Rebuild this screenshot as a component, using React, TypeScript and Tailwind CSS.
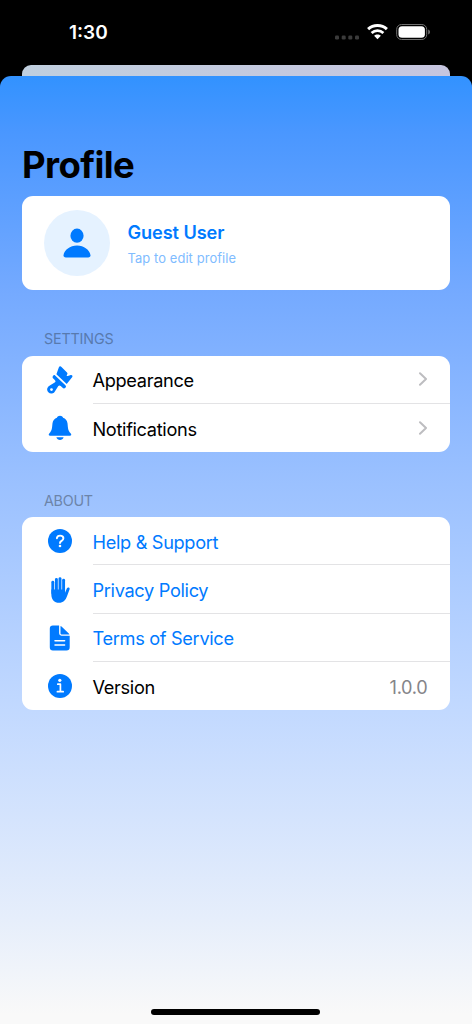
import React from 'react';

interface RowProps {
  icon: React.ReactNode;
  label: string;
  link?: boolean;
  last?: boolean;
  children?: React.ReactNode;
}

const BrushIcon = () => (
  <svg width="28" height="28" viewBox="0 0 28 28" fill="#007aff">
    <path d="M10.4 8.2L12.8 1.4C13.3 .1 14.6 0 15.5 .9L21 6.5C21.8 7.4 21.6 8.1 20.9 9C20.4 9.8 21 10.2 21.8 9.9L24.8 9.1C26.3 8.9 27 10.2 26.1 11.3L20.7 17.9Z" />
    <path
      fillRule="evenodd"
      d="M9.1 9.4L19.4 19.2C20.4 20.2 20 21.1 19.3 21.8C18.5 22.6 17.5 22.6 16.6 21.8L14.7 20C13.8 19.2 13 19.3 12.3 20L9.2 25.1A4.2 4.2 0 1 1 3.8 19.5L8.7 16.6C9.8 15.8 9.7 15 8.8 14.1L7 12.3C5.7 11 7.6 8 9.1 9.4ZM5.5 22.2A1.4 1.4 0 1 0 5.5 25A1.4 1.4 0 1 0 5.5 22.2Z"
    />
  </svg>
);

const BellIcon = () => (
  <svg width="28" height="28" viewBox="0 0 28 28" fill="#007aff">
    <path d="M4.2 21.8C2.5 21.8 2.3 20.4 3.4 19.2C6.3 16.4 6 13.4 6.5 9.2C6.9 6.4 8.6 4.6 10.9 3.8C11.5 1.1 16.5 1.1 17.1 3.8C19.4 4.6 21.1 6.4 21.5 9.2C22 13.4 21.7 16.4 24.6 19.2C25.7 20.4 25.5 21.8 23.8 21.8Z" />
    <path d="M10.4 23.3H17.6C17.1 25.1 15.7 26.1 14 26.1C12.3 26.1 10.9 25.1 10.4 23.3Z" />
  </svg>
);

const HelpIcon = () => (
  <svg width="28" height="28" viewBox="0 0 28 28" fill="none">
    <circle cx="14" cy="14" r="12" fill="#007aff" />
    <path
      d="M10.9 11.2C11.1 9.5 12.3 8.6 14.1 8.6C16 8.6 17.4 9.6 17.4 11.3C17.4 12.6 16.7 13.2 15.6 13.9C14.5 14.6 14 15.1 14 16"
      stroke="white"
      strokeWidth="1.9"
      strokeLinecap="round"
      strokeLinejoin="round"
    />
    <circle cx="14" cy="19" r="1.3" fill="white" />
  </svg>
);

const HandIcon = () => (
  <svg width="28" height="28" viewBox="0 0 28 28" fill="none">
    <g stroke="#007aff" strokeLinecap="round" strokeWidth="2.9">
      <path d="M6.8 6.2V17" />
      <path d="M10.4 3.5V16" />
      <path d="M14 2.6V16" />
      <path d="M17.6 4.2V17" />
    </g>
    <path
      d="M5.35 13.5H19.05V16.7L20.8 12.6C21.5 10.9 24.2 11.4 23.6 13.2L21.1 20C19.6 24.4 17.1 26.8 13.2 26.8C8.1 26.8 5.35 23.4 5.35 18.5Z"
      fill="#007aff"
    />
  </svg>
);

const DocumentIcon = () => (
  <svg width="28" height="28" viewBox="0 0 28 28" fill="#007aff">
    <path d="M6.9 1.5H13.1V9.3Q13.1 11.7 15.5 11.7H23.7V23.2Q23.7 26.5 20.5 26.5H6.9Q3.8 26.5 3.8 23.2V4.8Q3.8 1.5 6.9 1.5Z" />
    <path d="M14.5 1.9Q15 2 15.5 2.5L22.8 9.5Q23.3 10 23.4 10.4H15.5Q14.5 10.4 14.5 9.4Z" />
    <path d="M9 16.7H18.6M9 21.1H18.6" stroke="white" strokeWidth="1.5" strokeLinecap="round" />
  </svg>
);

const InfoIcon = () => (
  <svg width="28" height="28" viewBox="0 0 28 28" fill="none">
    <circle cx="14" cy="14" r="12" fill="#007aff" />
    <circle cx="13.8" cy="8.3" r="1.6" fill="white" />
    <path
      d="M11.8 12.2H14.4V19.4M11.4 19.7H17.2"
      stroke="white"
      strokeWidth="1.7"
      strokeLinecap="round"
      strokeLinejoin="round"
    />
  </svg>
);

const Chevron = () => (
  <svg width="10" height="14" viewBox="0 0 10 14" fill="none">
    <path d="M2 1.3L8 7L2 12.7" stroke="#bdbdc0" strokeWidth="2" strokeLinecap="round" strokeLinejoin="round" />
  </svg>
);

function Row({ icon, label, link, last, children }: RowProps) {
  return (
    <div className="flex h-[48.3px] items-center pl-[23.5px]">
      <div className="w-7 shrink-0">{icon}</div>
      <div
        className={`ml-[19px] flex h-full flex-1 items-center justify-between pr-[22px] ${
          last ? '' : 'border-b border-[#e3e3e5]'
        }`}
      >
        <span className={`pt-[3px] text-[18.2px] tracking-[-0.33px] ${link ? 'text-[#007aff]' : 'text-black'}`}>
          {label}
        </span>
        {children}
      </div>
    </div>
  );
}

function StatusBar() {
  return (
    <div className="flex h-[65px] items-start justify-between pl-[69px] pr-[41px]">
      <span className="mt-[19px] text-[19px] font-semibold leading-7 text-white">1:30</span>
      <div className="mt-6 flex items-start">
        <svg width="24" height="16" viewBox="0 0 24 16" fill="#3b3b3b">
          <rect x="0" y="11.5" width="4" height="4" rx="1.3" />
          <rect x="6.7" y="11.5" width="4" height="4" rx="1.3" />
          <rect x="13.3" y="11.5" width="4" height="4" rx="1.3" />
          <rect x="20" y="11.5" width="4" height="4" rx="1.3" />
        </svg>
        <svg className="ml-2" width="21" height="16" viewBox="0 0 21 16" fill="none">
          <path d="M1.1 5.2C6.3 .3 14.7 .3 19.9 5.2" stroke="white" strokeWidth="3" />
          <path d="M4.6 9C8 5.9 13 5.9 16.4 9" stroke="white" strokeWidth="2.8" />
          <path d="M7.1 11.8C9 9.9 12 9.9 13.9 11.8L10.5 15.3Z" fill="white" />
        </svg>
        <svg className="ml-2" width="35" height="16" viewBox="0 0 35 16" fill="none">
          <rect x=".7" y=".5" width="30" height="15" rx="4.8" stroke="#707070" />
          <rect x="2.5" y="2.3" width="26.4" height="11.4" rx="3.5" fill="white" />
          <path d="M32.2 5.5C34.6 6.3 34.6 9.7 32.2 10.5Z" fill="#707070" />
        </svg>
      </div>
    </div>
  );
}

export default function App() {
  return (
    <div className="flex h-[1024px] w-[472px] flex-col overflow-hidden bg-black font-['Inter',sans-serif]">
      <StatusBar />
      <div className="mx-[22px] h-[11px] shrink-0 rounded-t-[9px] bg-linear-to-r from-[#c0cfdf] to-[#c6c5df]" />

      <main className="flex flex-1 flex-col rounded-t-[11px] bg-[linear-gradient(180deg,#3292ff_0%,#4a97ff_6%,#75aaff_23%,#9bc1ff_43%,#c2d9ff_67%,#e6eefb_89%,#f9f9f9_99%)] pl-[22px] pr-[22.5px]">
        <h1 className="mt-[66px] text-[36.5px] font-bold leading-[46px] tracking-[-0.6px] text-black">Profile</h1>

        {/* Profile card */}
        <section className="mt-[7.5px] flex h-[94.5px] items-center rounded-[11px] bg-white pl-[22px]">
          <div className="flex h-[66px] w-[66px] items-center justify-center rounded-full bg-[#e5f2ff]">
            <svg width="28" height="30" viewBox="0 0 28 30" fill="#007aff">
              <ellipse cx="14" cy="7.7" rx="6.6" ry="7.1" />
              <path d="M2.9 29.4C1 29.4 .3 28.5 .5 27.2C1.3 22 7 17.5 14 17.5C21 17.5 26.7 22 27.5 27.2C27.7 28.5 27 29.4 25.1 29.4Z" />
            </svg>
          </div>
          <div className="ml-[17.5px] flex flex-col pt-[5px]">
            <span className="text-[18.2px] font-semibold leading-6 tracking-[-0.1px] text-[#007aff]">Guest User</span>
            <span className="mt-[3.5px] text-[12.9px] leading-6 tracking-[0.1px] text-[#80bcff]">
              Tap to edit profile
            </span>
          </div>
        </section>

        <h2 className="mt-[38.5px] pl-[22px] text-[14.3px] leading-5 tracking-[-0.15px] text-[#587aae]">SETTINGS</h2>
        <section className="mt-[7px] rounded-[11px] bg-white">
          <Row icon={<BrushIcon />} label="Appearance">
            <Chevron />
          </Row>
          <Row icon={<BellIcon />} label="Notifications" last>
            <Chevron />
          </Row>
        </section>

        <h2 className="mt-[38.5px] pl-[22px] text-[14.3px] leading-5 tracking-[-0.25px] text-[#6c84a9]">ABOUT</h2>
        <section className="mt-[6.5px] rounded-[11px] bg-white">
          <Row icon={<HelpIcon />} label="Help & Support" link />
          <Row icon={<HandIcon />} label="Privacy Policy" link />
          <Row icon={<DocumentIcon />} label="Terms of Service" link />
          <Row icon={<InfoIcon />} label="Version" last>
            <span className="pt-[3px] text-[18.2px] tracking-[-0.3px] text-[#858589]">1.0.0</span>
          </Row>
        </section>

        <div className="mx-auto mb-[9px] mt-auto h-[6px] w-[169px] rounded-full bg-black" />
      </main>
    </div>
  );
}
